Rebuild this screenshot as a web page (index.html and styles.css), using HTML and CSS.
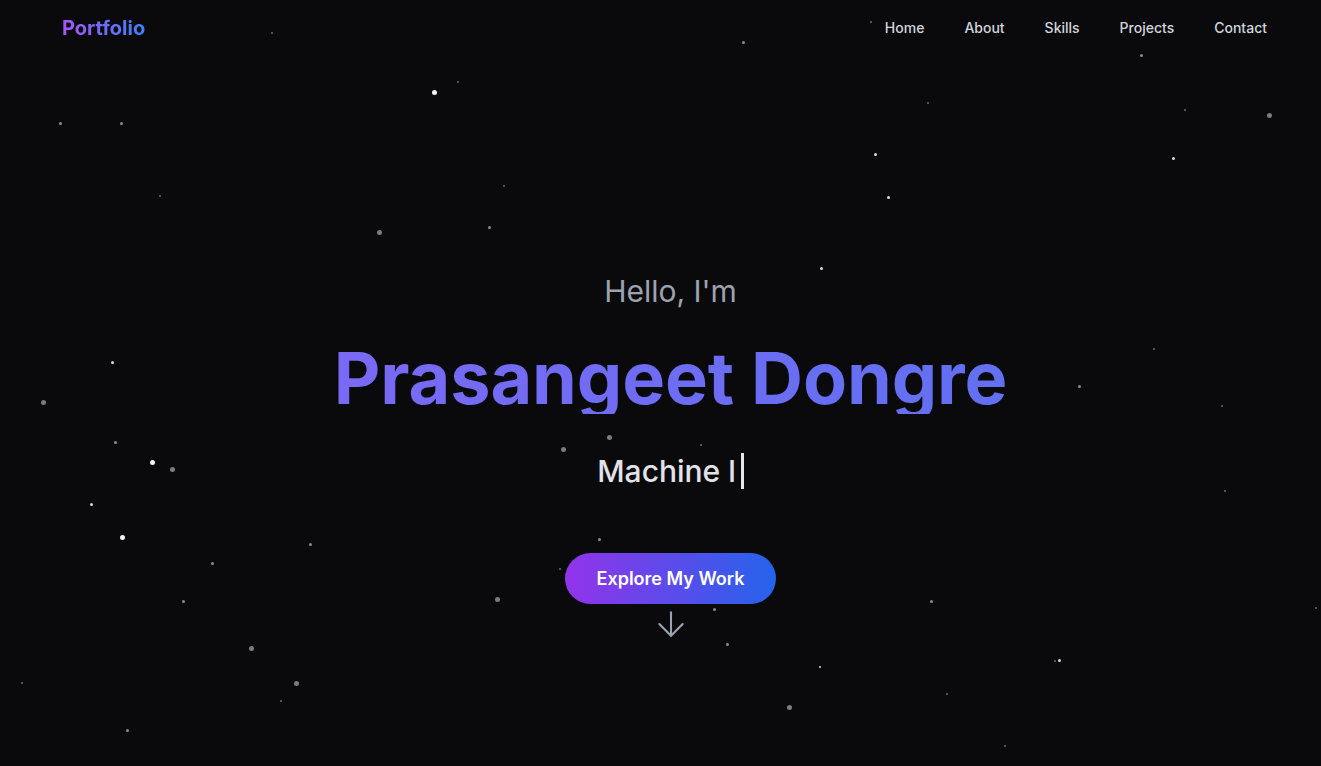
FILE: index.html
```html
<!DOCTYPE html>
<html lang="en">
<head>
<meta charset="utf-8">
<title>Portfolio</title>
<link rel="stylesheet" href="styles.css">
</head>
<body>
<div class="page">
  <div class="stars">
    <span class="star s2" style="left:271px;top:32px"></span>
    <span class="star s3" style="left:742px;top:41px"></span>
    <span class="star s2" style="left:870px;top:21px"></span>
    <span class="star s3" style="left:1140px;top:54px"></span>
    <span class="star s2" style="left:457px;top:81px"></span>
    <span class="star s4 bright" style="left:432px;top:90px"></span>
    <span class="star s3" style="left:59px;top:122px"></span>
    <span class="star s3" style="left:120px;top:122px"></span>
    <span class="star s2" style="left:927px;top:102px"></span>
    <span class="star s2" style="left:1184px;top:109px"></span>
    <span class="star s4" style="left:1267px;top:113px"></span>
    <span class="star s3 bright" style="left:874px;top:153px"></span>
    <span class="star s3 bright" style="left:1172px;top:157px"></span>
    <span class="star s2" style="left:503px;top:185px"></span>
    <span class="star s2" style="left:159px;top:195px"></span>
    <span class="star s3 bright" style="left:887px;top:196px"></span>
    <span class="star s4" style="left:377px;top:230px"></span>
    <span class="star s3" style="left:488px;top:226px"></span>
    <span class="star s3 bright" style="left:820px;top:267px"></span>
    <span class="star s2" style="left:1153px;top:348px"></span>
    <span class="star s3 bright" style="left:111px;top:361px"></span>
    <span class="star s3" style="left:1078px;top:385px"></span>
    <span class="star s4" style="left:41px;top:400px"></span>
    <span class="star s2" style="left:1221px;top:405px"></span>
    <span class="star s3" style="left:114px;top:441px"></span>
    <span class="star s4" style="left:607px;top:435px"></span>
    <span class="star s4" style="left:561px;top:447px"></span>
    <span class="star s2" style="left:700px;top:444px"></span>
    <span class="star s4 bright" style="left:150px;top:460px"></span>
    <span class="star s4" style="left:170px;top:467px"></span>
    <span class="star s2" style="left:1224px;top:490px"></span>
    <span class="star s3 bright" style="left:90px;top:503px"></span>
    <span class="star s4 bright" style="left:120px;top:535px"></span>
    <span class="star s3" style="left:598px;top:538px"></span>
    <span class="star s3" style="left:309px;top:543px"></span>
    <span class="star s3" style="left:211px;top:562px"></span>
    <span class="star s2" style="left:559px;top:568px"></span>
    <span class="star s3" style="left:182px;top:600px"></span>
    <span class="star s4" style="left:495px;top:597px"></span>
    <span class="star s3" style="left:930px;top:600px"></span>
    <span class="star s3" style="left:713px;top:608px"></span>
    <span class="star s2" style="left:1315px;top:607px"></span>
    <span class="star s3" style="left:726px;top:643px"></span>
    <span class="star s4" style="left:249px;top:646px"></span>
    <span class="star s3 bright" style="left:1058px;top:659px"></span>
    <span class="star s2" style="left:1054px;top:660px"></span>
    <span class="star s2 bright" style="left:819px;top:666px"></span>
    <span class="star s4" style="left:294px;top:681px"></span>
    <span class="star s2" style="left:21px;top:682px"></span>
    <span class="star s2" style="left:946px;top:693px"></span>
    <span class="star s2" style="left:280px;top:700px"></span>
    <span class="star s4" style="left:787px;top:705px"></span>
    <span class="star s3" style="left:126px;top:729px"></span>
    <span class="star s2" style="left:1004px;top:745px"></span>
  </div>

  <header class="nav">
    <a class="logo" href="#">Portfolio</a>
    <nav class="links">
      <a href="#">Home</a>
      <a href="#">About</a>
      <a href="#">Skills</a>
      <a href="#">Projects</a>
      <a href="#">Contact</a>
    </nav>
  </header>

  <main class="hero">
    <p class="hello">Hello, I'm</p>
    <h1 class="name">Prasangeet Dongre</h1>
    <p class="role">Machine l<span class="cursor"></span></p>
    <a class="btn" href="#">Explore My Work</a>
    <svg class="arrow" width="40" height="40" viewBox="0 0 24 24" fill="none" stroke="currentColor" stroke-width="1.25" stroke-linecap="round" stroke-linejoin="round">
      <path d="M12 5v14"/>
      <path d="M19 12l-7 7-7-7"/>
    </svg>
  </main>
</div>
</body>
</html>
```

FILE: styles.css
```css
* { box-sizing: border-box; }
html, body { margin: 0; padding: 0; }
body {
  background: #0a0a0d;
  font-family: Inter, "Noto Sans", sans-serif;
  color: #e5e7eb;
  overflow: hidden;
}
.page {
  position: relative;
  width: 100%;
  height: 766px;
  display: flex;
  flex-direction: column;
}
.stars {
  position: absolute;
  inset: 0;
  pointer-events: none;
}
.star {
  position: absolute;
  border-radius: 50%;
  background: #8a8a90;
}
.star.s2 { width: 2px; height: 2px; background: #6b6b72; }
.star.s3 { width: 3px; height: 3px; }
.star.s4 { width: 5px; height: 5px; background: #7b7b82; }
.star.bright { background: #d8d8dc; }
.star.s4.bright { width: 5px; height: 5px; background: #f4f4f6; }

.nav {
  position: relative;
  z-index: 1;
  display: flex;
  justify-content: space-between;
  align-items: center;
  height: 55px;
  padding: 0 54px 0 62px;
}
.logo {
  font-size: 20px;
  font-weight: 700;
  text-decoration: none;
  background: linear-gradient(90deg, #a855f7, #3b82f6);
  -webkit-background-clip: text;
  background-clip: text;
  color: transparent;
}
.links {
  display: flex;
  gap: 40px;
}
.links a {
  color: #d1d5db;
  text-decoration: none;
  font-size: 14px;
  font-weight: 500;
}

.hero {
  position: relative;
  z-index: 1;
  display: flex;
  flex-direction: column;
  align-items: center;
  padding-top: 218px;
  padding-left: 20px;
}
.hello {
  margin: 0;
  font-size: 30px;
  line-height: 36px;
  color: #9ca3af;
  font-weight: 400;
}
.name {
  margin: 33px 0 0;
  font-size: 72px;
  line-height: 72px;
  font-weight: 700;
  letter-spacing: -0.1px;
  background: linear-gradient(90deg, #7a69f5, #6170f1);
  -webkit-background-clip: text;
  background-clip: text;
  color: transparent;
}
.role {
  margin: 39px 0 0;
  font-size: 30px;
  line-height: 36px;
  color: #e2e3e8;
  font-weight: 500;
  display: flex;
  align-items: center;
}
.cursor {
  display: inline-block;
  width: 3px;
  height: 36px;
  margin-left: 5px;
  background: #e5e7eb;
}
.btn {
  margin-top: 64px;
  padding: 12px 32px;
  border-radius: 999px;
  font-size: 18px;
  line-height: 27px;
  font-weight: 600;
  color: #ffffff;
  text-decoration: none;
  background: linear-gradient(90deg, #9333ea, #2563eb);
}
.arrow {
  margin-top: 0;
  color: #9ca3af;
}
```
